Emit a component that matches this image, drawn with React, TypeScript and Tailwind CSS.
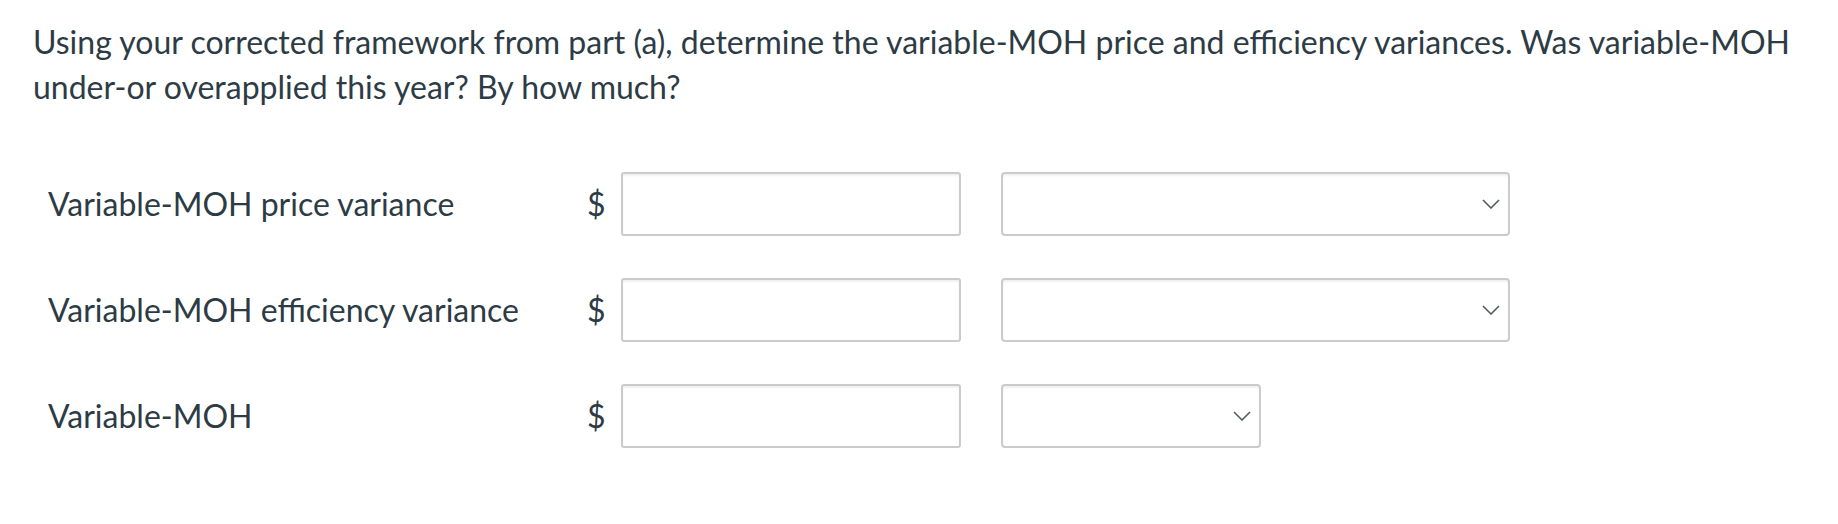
import React from 'react';

type Row = {
  label: string;
  selectWidth: string;
};

const rows: Row[] = [
  { label: 'Variable-MOH price variance', selectWidth: 'w-[509px]' },
  { label: 'Variable-MOH efficiency variance', selectWidth: 'w-[509px]' },
  { label: 'Variable-MOH', selectWidth: 'w-[260px]' }
];

const Chevron = () => (
  <svg width="18" height="10" viewBox="0 0 18 10" fill="none" className="mr-[8px]">
    <polyline points="1,1 9,9 17,1" stroke="#555b60" strokeWidth="1.6" fill="none" />
  </svg>
);

const AnswerRow = ({ row }: { row: Row }) => (
  <div className="flex h-[64px] items-center pl-[48px]">
    <span className="w-[539px] text-[32px] leading-none">{row.label}</span>
    <span className="w-[34px] text-[32px] leading-none">$</span>
    <div className="h-[64px] w-[340px] rounded-[3px] border-2 border-[#cbcbcb] bg-white shadow-[inset_0_2px_2px_rgba(0,0,0,0.06)]" />
    <div
      className={`ml-[40px] flex h-[64px] items-center justify-end rounded-[4px] border-2 border-[#cbcbcb] bg-white shadow-[inset_0_2px_2px_rgba(0,0,0,0.06)] ${row.selectWidth}`}
    >
      <Chevron />
    </div>
  </div>
);

const App: React.FC = () => {
  return (
    <div
      className="h-[524px] w-full bg-white text-[#2d3b45]"
      style={{ fontFamily: 'Lato, "Open Sans", sans-serif' }}
    >
      <p className="px-[33px] pt-[19px] text-[32px] leading-[45px]">
        Using your corrected framework from part (a), determine the variable-MOH price and efficiency
        variances. Was variable-MOH under-or overapplied this year? By how much?
      </p>
      <div className="mt-[63px] flex flex-col gap-[42px]">
        {rows.map((row) => (
          <AnswerRow key={row.label} row={row} />
        ))}
      </div>
    </div>
  );
};

export default App;
